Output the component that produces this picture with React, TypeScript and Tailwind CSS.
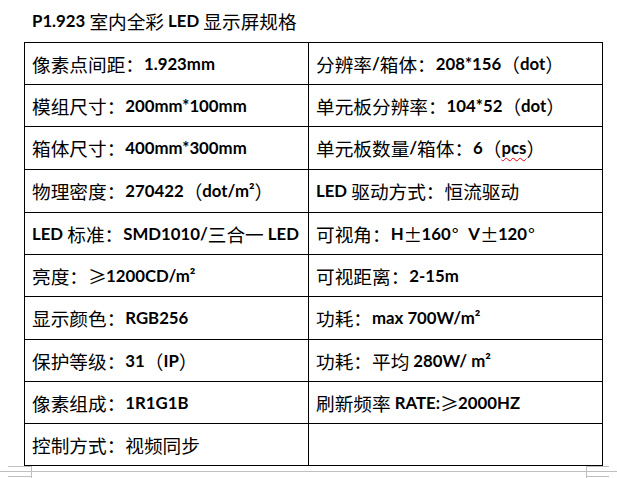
import type { ReactNode } from 'react';

const latin = 'font-["Lato","Liberation_Sans",sans-serif] font-bold text-[16.8px]';
const cjk = 'font-["Noto_Sans_CJK_SC",sans-serif] font-normal text-[18.67px]';

// 把文字拆成西文(粗体)和中文(常规)两段
function t(text: string): ReactNode {
  const parts = text.split(/([\x20-\x7e²]+|[±≥°])/).filter((p) => p !== '');
  return parts.map((p, i) => {
    if (p === '±' || p === '≥') {
      return (
        <span key={i} className={`${cjk} inline-block w-[18px] text-center`}>
          {p}
        </span>
      );
    }
    if (p === '°') {
      return (
        <span key={i} className={`${cjk} inline-block w-[14px] text-left pl-[1px]`}>
          {p}
        </span>
      );
    }
    if (/^[\x20-\x7e²]+$/.test(p)) {
      return (
        <span key={i} className={`${latin} whitespace-pre`}>
          {p}
        </span>
      );
    }
    return (
      <span key={i} className={cjk}>
        {p}
      </span>
    );
  });
}

const rows: { h: string; left: ReactNode; right: ReactNode }[] = [
  { h: 'h-[42px]', left: t('像素点间距：1.923mm'), right: t('分辨率/箱体：208*156（dot）') },
  { h: 'h-[42px]', left: t('模组尺寸：200mm*100mm'), right: t('单元板分辨率：104*52（dot）') },
  {
    h: 'h-[43px]',
    left: t('箱体尺寸：400mm*300mm'),
    right: (
      <>
        {t('单元板数量/箱体：6（')}
        <span className="underline decoration-wavy decoration-red-600 decoration-1 underline-offset-[3px]">
          {t('pcs')}
        </span>
        {t('）')}
      </>
    ),
  },
  { h: 'h-[43px]', left: t('物理密度：270422（dot/m²）'), right: t('LED 驱动方式：恒流驱动') },
  { h: 'h-[42px]', left: t('LED 标准：SMD1010/三合一 LED'), right: t('可视角：H±160° V±120°') },
  { h: 'h-[42px]', left: t('亮度：≥1200CD/m²'), right: t('可视距离：2-15m') },
  { h: 'h-[43px]', left: t('显示颜色：RGB256'), right: t('功耗：max 700W/m²') },
  { h: 'h-[42px]', left: t('保护等级：31（IP）'), right: t('功耗：平均 280W/ m²') },
  { h: 'h-[42px]', left: t('像素组成：1R1G1B'), right: t('刷新频率 RATE:≥2000HZ') },
  { h: 'h-[42px]', left: t('控制方式：视频同步'), right: null },
];

export default function App() {
  return (
    <div className="w-[617px] h-[478px] bg-white text-black overflow-hidden [text-spacing-trim:space-all]">
      <div className="pl-[24px]">
        <div className="h-[42px] flex items-center pl-[8px] pb-[1px]">{t('P1.923 室内全彩 LED 显示屏规格')}</div>
        <div className="grid grid-cols-[284px_294px] w-[579px] border-l border-t border-black">
          {rows.map((r, i) => (
            <div key={i} className="contents">
              <div className={`${r.h} flex items-center pl-[7px] border-r border-b border-black whitespace-nowrap`}>
                {r.left}
              </div>
              <div className={`${r.h} flex items-center pl-[7px] border-r border-b border-black whitespace-nowrap`}>
                {r.right}
              </div>
            </div>
          ))}
        </div>
      </div>
      {/* 页面边角标记 */}
      <svg width="617" height="12" className="block">
        <g stroke="#bfbfbf" strokeWidth="1" shapeRendering="crispEdges">
          <line x1="0" y1="5.5" x2="617" y2="5.5" />
          <line x1="8" y1="0.5" x2="31" y2="0.5" />
          <line x1="8" y1="10.5" x2="31" y2="10.5" />
          <line x1="31.5" y1="0" x2="31.5" y2="12" />
          <line x1="586" y1="0.5" x2="609" y2="0.5" />
          <line x1="586" y1="10.5" x2="609" y2="10.5" />
          <line x1="586.5" y1="0" x2="586.5" y2="12" />
        </g>
      </svg>
    </div>
  );
}
